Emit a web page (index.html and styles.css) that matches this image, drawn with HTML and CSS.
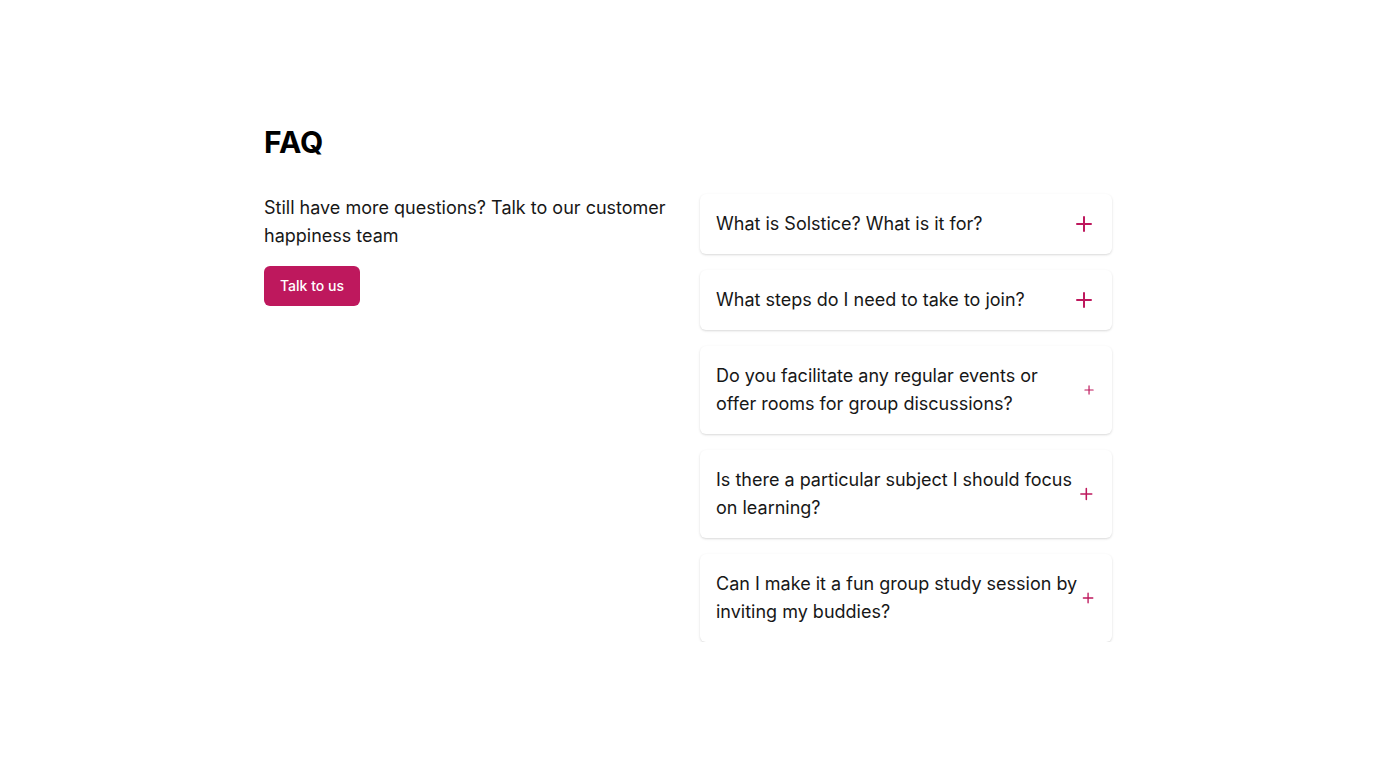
FILE: index.html
```html
<!DOCTYPE html>
<html lang="en">
<head>
<meta charset="utf-8">
<title>FAQ</title>
<link rel="stylesheet" href="styles.css">
</head>
<body>
<main class="faq">
  <h1 class="faq-title">FAQ</h1>
  <div class="faq-grid">
    <div class="faq-intro">
      <p class="faq-lead">Still have more questions? Talk to our customer happiness team</p>
      <button class="btn" type="button">Talk to us</button>
    </div>
    <div class="faq-list">
      <div class="faq-item">
        <span class="faq-q">What is Solstice? What is it for?</span>
        <svg class="faq-icon" width="24" height="24" viewBox="0 0 24 24" fill="none" stroke="currentColor" stroke-width="2" stroke-linecap="round"><path d="M12 5v14M5 12h14"/></svg>
      </div>
      <div class="faq-item">
        <span class="faq-q">What steps do I need to take to join?</span>
        <svg class="faq-icon" width="24" height="24" viewBox="0 0 24 24" fill="none" stroke="currentColor" stroke-width="2" stroke-linecap="round"><path d="M12 5v14M5 12h14"/></svg>
      </div>
      <div class="faq-item">
        <span class="faq-q">Do you facilitate any regular events or offer rooms for group discussions?</span>
        <svg class="faq-icon" width="24" height="24" viewBox="0 0 24 24" fill="none" stroke="currentColor" stroke-width="2" stroke-linecap="round"><path d="M12 5v14M5 12h14"/></svg>
      </div>
      <div class="faq-item">
        <span class="faq-q">Is there a particular subject I should focus on learning?</span>
        <svg class="faq-icon" width="24" height="24" viewBox="0 0 24 24" fill="none" stroke="currentColor" stroke-width="2" stroke-linecap="round"><path d="M12 5v14M5 12h14"/></svg>
      </div>
      <div class="faq-item">
        <span class="faq-q">Can I make it a fun group study session by inviting my buddies?</span>
        <svg class="faq-icon" width="24" height="24" viewBox="0 0 24 24" fill="none" stroke="currentColor" stroke-width="2" stroke-linecap="round"><path d="M12 5v14M5 12h14"/></svg>
      </div>
    </div>
  </div>
</main>
</body>
</html>
```
FILE: styles.css
```css
* { box-sizing: border-box; }
html, body { margin: 0; padding: 0; background: #fff; }
body {
  font-family: Inter, "Noto Sans", sans-serif;
  color: #171717;
}
.faq {
  width: 848px;
  margin: 0 auto;
  padding-top: 124px;
}
.faq-title {
  margin: 0 0 34px;
  font-size: 30px;
  line-height: 36px;
  font-weight: 700;
  color: #000;
}
.faq-grid {
  display: grid;
  grid-template-columns: 412px 412px;
  gap: 24px;
  align-items: start;
}
.faq-lead {
  margin: 0 0 16px;
  font-size: 18px;
  line-height: 28px;
  color: #171717;
}
.btn {
  font-family: inherit;
  font-size: 14px;
  line-height: 20px;
  font-weight: 500;
  color: #fff;
  background: #be185d;
  border: none;
  border-radius: 6px;
  padding: 10px 16px;
  height: 40px;
  cursor: pointer;
}
.faq-list {
  display: flex;
  flex-direction: column;
  gap: 16px;
}
.faq-item {
  display: flex;
  align-items: center;
  justify-content: space-between;
  padding: 16px;
  background: #fff;
  border-radius: 6px;
  box-shadow: 0 1px 3px rgba(0,0,0,0.1), 0 1px 2px rgba(0,0,0,0.06);
}
.faq-q {
  font-size: 18px;
  line-height: 28px;
  color: #171717;
}
.faq-icon {
  width: 24px;
  min-width: 0;
  flex-shrink: 1;
  color: #be185d;
}
```
